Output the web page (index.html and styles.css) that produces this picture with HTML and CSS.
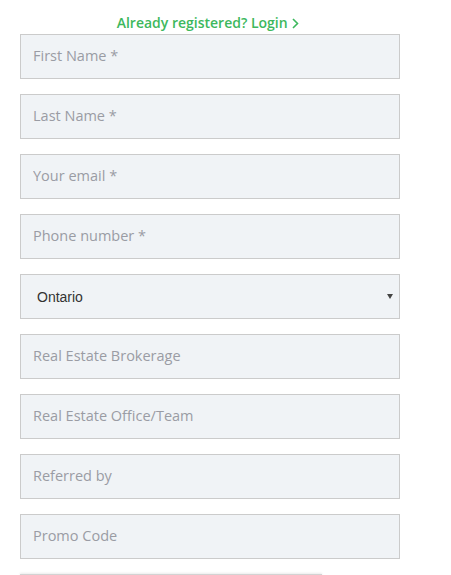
FILE: index.html
```html
<!DOCTYPE html>
<html>
<head>
<meta charset="utf-8">
<link rel="stylesheet" href="styles.css">
</head>
<body>
<form class="signup">
  <p class="login-link">Already registered? Login <svg class="chev" width="7" height="11" viewBox="0 0 7 11"><path d="M1 1 L5.5 5.5 L1 10" fill="none" stroke="#3db85d" stroke-width="1.6"/></svg></p>
  <input class="field" type="text" placeholder="First Name *">
  <input class="field" type="text" placeholder="Last Name *">
  <input class="field" type="email" placeholder="Your email *">
  <input class="field" type="tel" placeholder="Phone number *">
  <div class="select-wrap">
    <select class="field select">
      <option>Ontario</option>
    </select>
  </div>
  <input class="field" type="text" placeholder="Real Estate Brokerage">
  <input class="field" type="text" placeholder="Real Estate Office/Team">
  <input class="field" type="text" placeholder="Referred by">
  <input class="field" type="text" placeholder="Promo Code">
  <div class="captcha"></div>
</form>
</body>
</html>
```

FILE: styles.css
```css
html, body {
  margin: 0;
  padding: 0;
  background: #fff;
}
.signup {
  width: 380px;
  padding: 13px 0 0 20px;
  display: flex;
  flex-direction: column;
  gap: 15px;
  font-family: "Open Sans", sans-serif;
}
.login-link {
  margin: 0 0 -15px 0;
  height: 21px;
  text-align: center;
  padding-right: 4px;
  font-family: "Open Sans", sans-serif;
  font-weight: 600;
  font-size: 14px;
  line-height: 20px;
  color: #3db85d;
}
.chev {
  vertical-align: -1px;
  margin-left: 1px;
}
.field {
  box-sizing: border-box;
  width: 380px;
  height: 45px;
  margin: 0;
  padding: 0 12px 2px;
  border: 1px solid #cbcbcb;
  border-radius: 0;
  background: #f0f3f6;
  font-family: "Open Sans", sans-serif;
  font-size: 14.5px;
  color: #333;
  outline: none;
}
.field::placeholder {
  color: #9a9ca4;
}
.select-wrap {
  position: relative;
  height: 45px;
}
.select {
  -webkit-appearance: none;
  appearance: none;
  font-family: "Liberation Sans", Arial, sans-serif;
  font-size: 14px;
  color: #333;
  padding: 0 0 0 16px;
}
.select-wrap::after {
  content: "";
  position: absolute;
  left: 367px;
  top: 20px;
  border-left: 3px solid transparent;
  border-right: 3px solid transparent;
  border-top: 5px solid #444;
  pointer-events: none;
}
.captcha {
  width: 302px;
  height: 10px;
  border-top: 1px solid #d3d3d3;
  box-shadow: 0 -1px 2px rgba(0,0,0,0.08);
}
```
